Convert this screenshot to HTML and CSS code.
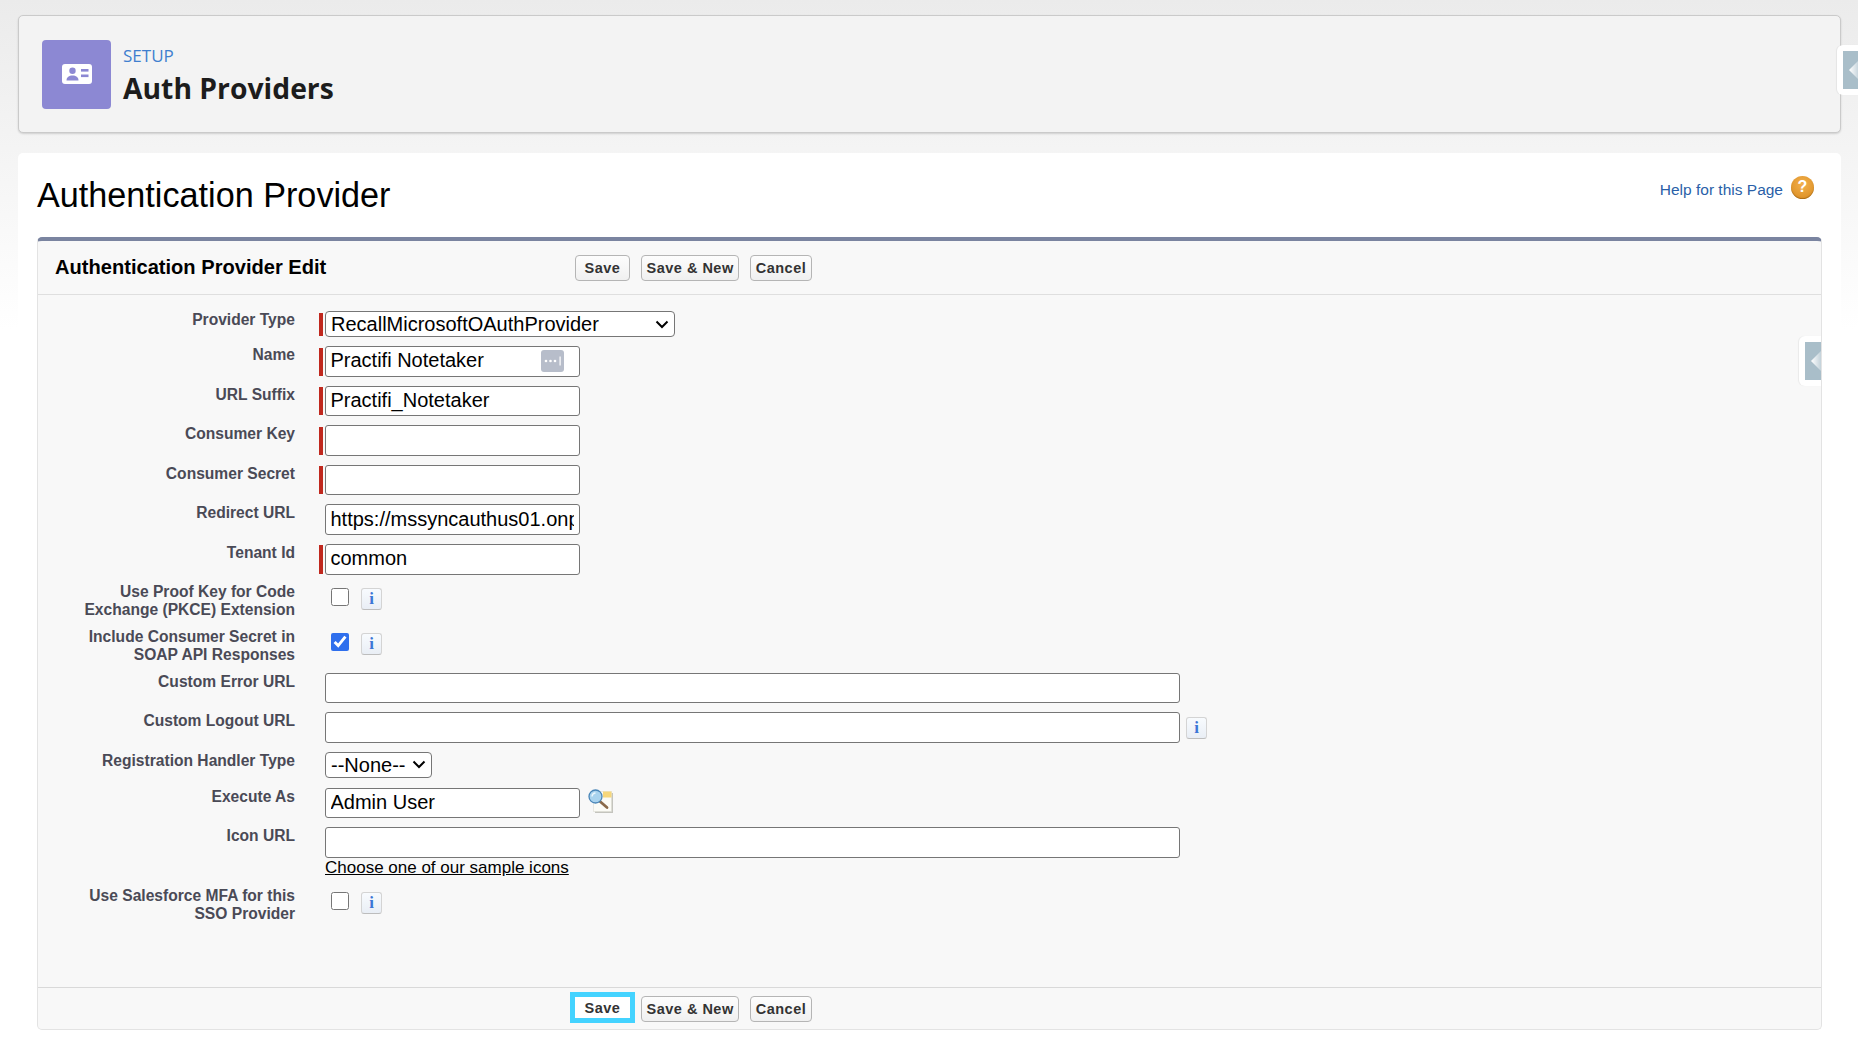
FILE: index.html
```html
<!DOCTYPE html>
<html lang="en">
<head>
  <meta charset="UTF-8">
  <title>Auth Providers</title>
  <link rel="stylesheet" href="styles.css">
</head>
<body>
  <div class="side-tab side-tab-page"><span class="tab-arrow"></span></div>

  <header class="page-header">
    <div class="header-icon">
      <svg width="30" height="20" viewBox="0 0 30 20">
        <rect x="0" y="0" width="30" height="20" rx="3" fill="#fff"/>
        <circle cx="10.5" cy="6.8" r="3.2" fill="#8c88d3"/>
        <path d="M4.5 16.5c0-3.4 2.6-5 6-5s6 1.600 6 5z" fill="#8c88d3"/>
        <rect x="19" y="5" width="7.500" height="2.600" fill="#8c88d3"/>
        <rect x="19" y="10.500" width="7.500" height="2.600" fill="#8c88d3"/>
      </svg>
    </div>
    <div class="header-text">
      <div class="header-sup">SETUP</div>
      <div class="header-title">Auth Providers</div>
    </div>
  </header>

  <main class="content">
    <div class="title-row">
      <h1>Authentication Provider</h1>
      <a class="help-link" href="#">Help for this Page <span class="help-icon">?</span></a>
    </div>

    <section class="panel">
      <div class="side-tab side-tab-panel"><span class="tab-arrow"></span></div>

      <div class="panel-head">
        <h2>Authentication Provider Edit</h2>
        <div class="btn-row">
          <button class="btn">Save</button>
          <button class="btn">Save &amp; New</button>
          <button class="btn">Cancel</button>
        </div>
      </div>

      <div class="panel-body">
        <div class="row">
          <label>Provider Type</label>
          <div class="field req">
            <select class="sel-wide"><option>RecallMicrosoftOAuthProvider</option></select>
          </div>
        </div>
        <div class="row">
          <label>Name</label>
          <div class="field req">
            <div class="input-wrap">
              <input class="inp" type="text" value="Practifi Notetaker">
              <span class="pw-icon">
                <svg width="23" height="22" viewBox="0 0 23 22">
                  <rect width="23" height="22" rx="3" fill="#b7bdca"/>
                  <circle cx="5" cy="11" r="1.300" fill="#fff"/>
                  <circle cx="9.500" cy="11" r="1.300" fill="#fff"/>
                  <circle cx="14" cy="11" r="1.300" fill="#fff"/>
                  <rect x="18.500" y="6.500" width="1.200" height="9" fill="#fff"/>
                </svg>
              </span>
            </div>
          </div>
        </div>
        <div class="row">
          <label>URL Suffix</label>
          <div class="field req"><input class="inp" type="text" value="Practifi_Notetaker"></div>
        </div>
        <div class="row">
          <label>Consumer Key</label>
          <div class="field req"><input class="inp" type="text"></div>
        </div>
        <div class="row">
          <label>Consumer Secret</label>
          <div class="field req"><input class="inp" type="text"></div>
        </div>
        <div class="row">
          <label>Redirect URL</label>
          <div class="field"><input class="inp" type="text" value="https://mssyncauthus01.onpremise.example.com/callback"></div>
        </div>
        <div class="row">
          <label>Tenant Id</label>
          <div class="field req"><input class="inp" type="text" value="common"></div>
        </div>
        <div class="row row-pkce">
          <label>Use Proof Key for Code Exchange (PKCE) Extension</label>
          <div class="field check-field">
            <input class="chk" type="checkbox">
            <span class="info">i</span>
          </div>
        </div>
        <div class="row">
          <label>Include Consumer Secret in SOAP API Responses</label>
          <div class="field check-field">
            <input class="chk" type="checkbox" checked>
            <span class="info">i</span>
          </div>
        </div>
        <div class="row">
          <label>Custom Error URL</label>
          <div class="field"><input class="inp inp-long" type="text"></div>
        </div>
        <div class="row">
          <label>Custom Logout URL</label>
          <div class="field">
            <input class="inp inp-long" type="text">
            <span class="info info-after">i</span>
          </div>
        </div>
        <div class="row">
          <label>Registration Handler Type</label>
          <div class="field">
            <select class="sel-small"><option>--None--</option></select>
          </div>
        </div>
        <div class="row row-execute">
          <label>Execute As</label>
          <div class="field">
            <input class="inp" type="text" value="Admin User">
            <svg class="lookup" width="26" height="24" viewBox="0 0 26 24">
              <rect x="7" y="4" width="18" height="20" fill="#c4c4be"/>
              <rect x="5.500" y="2.500" width="18" height="20" fill="#fbfbf6" stroke="#dcdcd4" stroke-width=".6"/>
              <rect x="15" y="2.500" width="8.500" height="6" fill="#f6d77c"/>
              <path d="M11.500 12l7.500 6.500" stroke="#8a6a4a" stroke-width="2.800" stroke-linecap="round"/>
              <circle cx="7.500" cy="7.500" r="6.500" fill="#a9d3ee" stroke="#4a86b8" stroke-width="1.300"/>
              <path d="M4 7.500a3.800 3.800 0 0 1 3.500-3.500" stroke="#eaf6fd" stroke-width="1.400" fill="none"/>
            </svg>
          </div>
        </div>
        <div class="row">
          <label>Icon URL</label>
          <div class="field field-stack">
            <input class="inp inp-long" type="text">
            <a class="sample-link" href="#">Choose one of our sample icons</a>
          </div>
        </div>
        <div class="row">
          <label>Use Salesforce MFA for this SSO Provider</label>
          <div class="field check-field">
            <input class="chk" type="checkbox">
            <span class="info">i</span>
          </div>
        </div>
      </div>

      <div class="panel-foot">
        <div class="btn-row">
          <button class="btn btn-focus">Save</button>
          <button class="btn">Save &amp; New</button>
          <button class="btn">Cancel</button>
        </div>
      </div>
    </section>
  </main>
</body>
</html>
```

FILE: styles.css
```css
html, body {
  height: 100%;
}
body {
  margin: 0;
  padding: 15px 17px 0 18px;
  box-sizing: border-box;
  display: flex;
  flex-direction: column;
  overflow: hidden;
  position: relative;
  font-family: "Liberation Sans", Arial, sans-serif;
  background: linear-gradient(#ebebeb 0, #ffffff 330px);
  color: #000;
}

/* top header */
.page-header {
  height: 118px;
  box-sizing: border-box;
  display: flex;
  align-items: center;
  gap: 12px;
  padding-left: 23px;
  background: #f3f3f3;
  border: 1px solid #cacaca;
  border-radius: 5px;
  box-shadow: 0 1px 2px rgba(0, 0, 0, .15);
}
.header-icon {
  width: 69px;
  height: 69px;
  border-radius: 4px;
  background: #8c88d3;
  display: flex;
  align-items: center;
  justify-content: center;
}
.header-text {
  padding-top: 4px;
}
.header-sup {
  font-family: "Open Sans", sans-serif;
  font-size: 17px;
  line-height: 23px;
  color: #3f7fcf;
}
.header-title {
  font-family: "Open Sans", sans-serif;
  font-weight: 700;
  font-size: 28.300px;
  line-height: 42px;
  color: #1c1c1c;
}

/* white card */
.content {
  flex: 1;
  margin-top: 20px;
  padding: 0 19px;
  background: #fff;
  border-radius: 5px 5px 0 0;
}
.title-row {
  height: 84px;
  display: flex;
  justify-content: space-between;
}
h1 {
  margin: 20px 0 0;
  font-size: 34.200px;
  line-height: 44px;
  font-weight: 400;
}
.help-link {
  margin: 25px 8px 0 0;
  height: 24px;
  display: flex;
  align-items: center;
  gap: 8px;
  font-size: 15.500px;
  color: #2a5fa8;
  text-decoration: none;
}
.help-icon {
  width: 23px;
  height: 23px;
  margin-top: -6px;
  border-radius: 50%;
  display: flex;
  align-items: center;
  justify-content: center;
  background: radial-gradient(circle at 50% 35%, #f2b04c, #d98a1e);
  box-shadow: inset 0 -1px 1px rgba(120, 70, 0, .5);
  color: #fff;
  font-weight: 700;
  font-size: 16px;
}

/* edit panel */
.panel {
  position: relative;
  background: #f8f8f8;
  border: 1px solid #e3e3e3;
  border-top: 4px solid #7a84a0;
  border-radius: 5px;
}
.panel-head {
  height: 53px;
  display: flex;
  align-items: center;
  padding-left: 17px;
  border-bottom: 1px solid #dfdfdf;
}
h2 {
  width: 520px;
  margin: 0;
  font-size: 20.100px;
  font-weight: 700;
}
.btn-row {
  display: flex;
  gap: 11px;
}
.btn {
  height: 26px;
  padding: 0 4.500px;
  min-width: 55px;
  font-family: "Liberation Sans", Arial, sans-serif;
  font-size: 14.500px;
  font-weight: 700;
  letter-spacing: .5px;
  color: #333;
  background: linear-gradient(#fdfdfd, #f0f0f0);
  border: 1px solid #b5b5b5;
  border-radius: 4px;
}
.btn-focus {
  height: 21px;
  margin-top: 1px;
  padding: 1px 0 0;
  background: #fff;
  border: 0;
  border-radius: 0;
  outline: 5px solid #44d3ff;
}
.panel-body {
  height: 692px;
  box-sizing: border-box;
  padding-top: 16px;
  display: flex;
  flex-direction: column;
  gap: 9px;
}
.panel-foot {
  height: 42px;
  box-sizing: border-box;
  padding: 8px 0 0 537px;
  border-top: 1px solid #d9d9d9;
}

/* form rows */
.row {
  display: grid;
  grid-template-columns: 257px 1fr;
  column-gap: 24px;
}
.row-pkce {
  margin-top: -.8px;
}
.row-execute {
  margin-top: .7px;
}
.row label {
  box-sizing: border-box;
  padding-left: 30px;
  font-size: 15.600px;
  font-weight: 700;
  line-height: 18px;
  text-align: right;
  color: #4a4a56;
}
.field {
  display: flex;
  align-items: center;
  padding-left: 6px;
  position: relative;
}
.req::before {
  content: "";
  position: absolute;
  left: 0;
  top: 1.500px;
  bottom: 1px;
  width: 4px;
  background: #c0281e;
}
.inp {
  box-sizing: border-box;
  width: 255px;
  height: 30.600px;
  padding: 0 5px 1px 4.500px;
  font-family: "Liberation Sans", Arial, sans-serif;
  font-size: 20px;
  color: #000;
  background: #fff;
  border: 1px solid #767676;
  border-radius: 3px;
}
.inp-long {
  width: 855px;
}
select {
  box-sizing: border-box;
  height: 26px;
  padding: 0 24px 0 5px;
  font-family: "Liberation Sans", Arial, sans-serif;
  font-size: 20px;
  color: #000;
  appearance: none;
  background: #fff url("data:image/svg+xml,%3Csvg xmlns='http://www.w3.org/2000/svg' width='14' height='9'%3E%3Cpath d='M1.500 1.500L7 7l5.500-5.500' fill='none' stroke='%23000' stroke-width='2'/%3E%3C/svg%3E") no-repeat right 5px center;
  border: 1px solid #767676;
  border-radius: 4px;
}
.sel-wide {
  width: 350px;
}
.sel-small {
  width: 107px;
}
.input-wrap {
  position: relative;
  display: flex;
}
.pw-icon {
  position: absolute;
  left: 216px;
  top: 4px;
  height: 22px;
}
.check-field {
  align-items: flex-start;
  height: 36px;
}
.chk {
  width: 18px;
  height: 18px;
  margin: 5px 0 0 6px;
  accent-color: #2f6fed;
}
.info {
  box-sizing: border-box;
  width: 21px;
  height: 22px;
  margin: 5px 0 0 12px;
  display: flex;
  align-items: center;
  justify-content: center;
  font-family: "Liberation Serif", serif;
  font-weight: 700;
  font-size: 17px;
  color: #3b76d6;
  background: linear-gradient(#f8fbfe, #e9eef5);
  border: 1px solid #d4d4d4;
  border-bottom-color: #bdbdbd;
  border-radius: 3px;
}
.info-after {
  margin: 0 0 0 6px;
}
.lookup {
  margin-left: 8px;
  margin-top: -3px;
}
.field-stack {
  flex-direction: column;
  align-items: flex-start;
}
.sample-link {
  font-size: 17px;
  line-height: 20.500px;
  color: #000;
}

/* collapsed sidebar handles */
.side-tab {
  position: absolute;
  box-sizing: border-box;
  width: 22px;
  height: 50px;
  padding: 6px 0 6px 6px;
  background: #fff;
  border-radius: 6px 0 0 6px;
  box-shadow: -1px 0 1px rgba(0, 0, 0, .06);
}
.side-tab-page {
  left: 1837px;
  top: 45px;
}
.side-tab-panel {
  right: 0;
  top: 95px;
}
.tab-arrow {
  display: block;
  height: 100%;
  background: #a9bec9;
  position: relative;
  overflow: hidden;
}
.tab-arrow::after {
  content: "";
  position: absolute;
  right: 0;
  top: 9px;
  width: 10px;
  height: 20px;
  clip-path: polygon(0 50%, 100% 0, 100% 100%);
  background: linear-gradient(90deg, #ffffff, #c3d2da);
}
```
